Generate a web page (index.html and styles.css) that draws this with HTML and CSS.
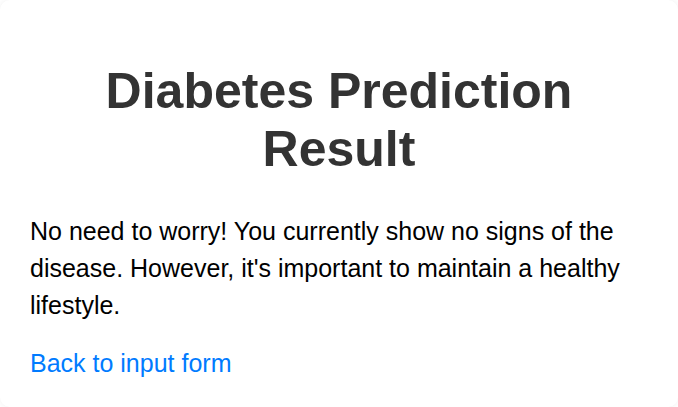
FILE: index.html
```html
<!DOCTYPE html>
<html lang="en">
<head>
<meta charset="utf-8">
<title>Diabetes Prediction Result</title>
<link rel="stylesheet" href="styles.css">
</head>
<body>
<div class="card">
  <h1 class="title">Diabetes Prediction Result</h1>
  <p class="message">No need to worry! You currently show no signs of the disease. However, it's important to maintain a healthy lifestyle.</p>
  <div class="back-row"><a class="back" href="#">Back to input form</a></div>
</div>
</body>
</html>
```

FILE: styles.css
```css
html, body {
  margin: 0;
  padding: 0;
  background: #ffffff;
}
body {
  font-family: "Liberation Sans", Arial, sans-serif;
}
.card {
  background: #ffffff;
  padding: 30px;
  border-radius: 10px;
  box-shadow: 0 0 6px rgba(0, 0, 0, 0.06);
  min-height: 347px;
  box-sizing: border-box;
  height: 407px;
}
.title {
  color: #333333;
  font-size: 50px;
  font-weight: bold;
  text-align: center;
  margin: 33px 0 35px;
  line-height: 57.5px;
}
.message {
  color: #000000;
  font-size: 25px;
  line-height: 37px;
  margin: 0;
}
.back-row {
  margin-top: 21px;
  font-size: 25px;
  line-height: 37px;
}
.back {
  color: #007bff;
  text-decoration: none;
}
```
